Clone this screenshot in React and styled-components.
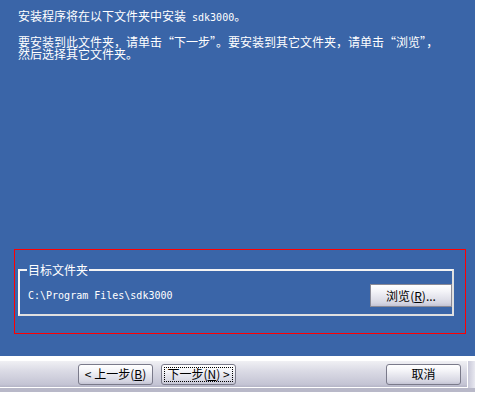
import React from "react";
import styled, { createGlobalStyle } from "styled-components";

const GlobalStyle = createGlobalStyle`
  body {
    margin: 0;
    background: #fff;
    font-family: "Noto Sans CJK SC", sans-serif;
  }
`;

const Window = styled.div`
  width: 475px;
  height: 400px;
  display: flex;
  flex-direction: column;
`;

const Panel = styled.div`
  height: 356px;
  background: #3a65a8;
  display: flex;
  flex-direction: column;
  box-sizing: border-box;
  padding: 10px 9px 22px 14px;
`;

const Message = styled.p`
  margin: 0 0 0 4px;
  color: #fff;
  font-size: 12px;
  line-height: 12px;
  white-space: nowrap;
  & + & {
    margin-top: 12px;
  }
`;

const Quote = styled.span`
  font-feature-settings: "fwid";
`;

const Mono = styled.span`
  font-family: "DejaVu Sans Mono", monospace;
  font-size: 10px;
`;

const Highlight = styled.div`
  margin-top: auto;
  height: 85px;
  box-sizing: border-box;
  border: 1px solid #ff0000;
  padding: 13px 11px 0 3px;
`;

const Group = styled.fieldset`
  margin: 0;
  padding: 7px 0 7px 8px;
  border: 2px solid #f4f4f4;
  border-right-color: #e0e0e0;
  border-bottom-color: #e0e0e0;
  display: flex;
  align-items: center;
  justify-content: space-between;
`;

const Legend = styled.legend`
  color: #fff;
  font-size: 12px;
  line-height: 14px;
  padding: 0 1px;
  margin-left: -1px;
`;

const Path = styled.span`
  color: #fff;
  font-family: "DejaVu Sans Mono", monospace;
  font-size: 10px;
`;

const Button = styled.button`
  width: 75px;
  height: 21px;
  box-sizing: border-box;
  padding: 0;
  border: 1px solid #7a7a8a;
  border-radius: 3px;
  background: linear-gradient(#ffffff, #f4f4f8 30%, #d6d6e2 85%, #c4c4d4);
  color: #000;
  font-family: "Noto Sans CJK SC", sans-serif;
  font-size: 12px;
  line-height: 12px;
  white-space: nowrap;
  outline: ${(p) => (p.$focused ? "1px dotted #000" : "none")};
  outline-offset: -4px;
`;

const BrowseButton = styled(Button)`
  width: 82px;
  height: 23px;
  border-radius: 0;
  border-color: #8a8a96;
`;

const Footer = styled.div`
  margin-top: 5px;
  height: 27px;
  display: flex;
`;

const Bar = styled.div`
  flex: 1;
  display: flex;
  align-items: center;
  gap: 8px;
  padding: 0 6px 0 78px;
  background: linear-gradient(#f0f0f4, #dcdce6 35%, #c4c4d4 90%, #b4b4c6);
  border-bottom: 1px solid #fff;
  border-right: 1px solid #fff;
`;

const Edge = styled.div`
  width: 7px;
  background: linear-gradient(90deg, #c8c8d8, #e8e8f0);
`;

const Spacer = styled.div`
  flex: 1;
`;

const Shadow = styled.div`
  height: 4px;
  background: #b8b8c8;
  width: 475px;
`;

const Key = ({ k }) => (
  <>
    (<u>{k}</u>)
  </>
);

export default function App() {
  return (
    <Window>
      <GlobalStyle />
      <Panel>
        <Message>
          安装程序将在以下文件夹中安装<Mono> sdk3000</Mono>。
        </Message>
        <Message>
          要安装到此文件夹，请单击<Quote>“</Quote>下一步<Quote>”</Quote>。要安装到其它文件夹，请单击<Quote>“</Quote>浏览<Quote>”</Quote>，
          <br />
          然后选择其它文件夹。
        </Message>
        <Highlight>
          <Group>
            <Legend>目标文件夹</Legend>
            <Path>C:\Program Files\sdk3000</Path>
            <BrowseButton>
              浏览<Key k="R" />...
            </BrowseButton>
          </Group>
        </Highlight>
      </Panel>
      <Footer>
        <Bar>
          <Button>
            &lt; 上一步<Key k="B" />
          </Button>
          <Button $focused>
            下一步<Key k="N" /> &gt;
          </Button>
          <Spacer />
          <Button>取消</Button>
        </Bar>
        <Edge />
      </Footer>
      <Shadow />
    </Window>
  );
}
